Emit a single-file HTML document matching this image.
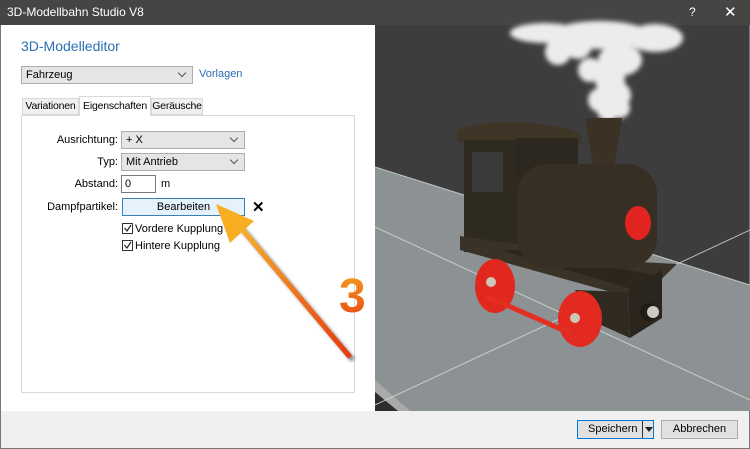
<!DOCTYPE html>
<html><head><meta charset="utf-8"><style>
*{margin:0;padding:0;box-sizing:border-box}
body{width:750px;height:449px;overflow:hidden;font-family:"Liberation Sans",sans-serif;font-size:11px;color:#000;background:#fff;position:relative}
.a{position:absolute}
.sel{position:absolute;background:#e5e5e5;border:1px solid #adadad;padding:2px 4px;font-size:11px;line-height:12px}
.sel:after{content:"";position:absolute;right:7px;top:3px;width:5px;height:5px;border-right:1px solid #555;border-bottom:1px solid #555;transform:rotate(45deg)}
.lbl{position:absolute;right:632px;font-size:11px;text-align:right}
.tab{position:absolute;top:98px;height:17px;border:1px solid #d9d9d9;background:#f0f0f0;font-size:10.5px;text-align:center;line-height:15px;letter-spacing:-0.2px}
</style></head><body>
<div class="a" style="left:0;top:0;width:750px;height:25px;background:#474543;color:#fff;font-size:12px;line-height:25px;padding-left:7px">3D-Modellbahn Studio V8</div>
<div class="a" style="left:689px;top:5px;color:#fff;font-size:12px">?</div>
<div class="a" style="left:724px;top:3px;color:#fff;font-size:15px">✕</div>
<div class="a" style="left:0;top:25px;width:1px;height:424px;background:#777"></div>
<div class="a" style="left:749px;top:25px;width:1px;height:424px;background:#777"></div>

<div class="a" style="left:21px;top:38px;color:#2d6fb6;font-size:14px">3D-Modelleditor</div>
<div class="sel" style="left:21px;top:66px;width:172px;height:18px">Fahrzeug</div>
<div class="a" style="left:199px;top:68px;color:#2d6fb6">Vorlagen</div>

<div class="a" style="left:21px;top:115px;width:334px;height:278px;border:1px solid #d9d9d9"></div>
<div class="tab" style="left:22px;width:57px">Variationen</div>
<div class="tab" style="left:151px;width:52px">Geräusche</div>
<div class="tab" style="left:79px;top:96px;height:20px;width:72px;background:#fff;border-bottom:none;line-height:18px">Eigenschaften</div>

<div class="lbl" style="top:134px">Ausrichtung:</div>
<div class="sel" style="left:121px;top:131px;width:124px;height:18px">+ X</div>
<div class="lbl" style="top:156px">Typ:</div>
<div class="sel" style="left:121px;top:153px;width:124px;height:18px">Mit Antrieb</div>
<div class="lbl" style="top:178px">Abstand:</div>
<div class="a" style="left:121px;top:175px;width:35px;height:18px;border:1px solid #7a7a7a;padding:2px 3px">0</div>
<div class="a" style="left:161px;top:178px">m</div>
<div class="lbl" style="top:201px">Dampfpartikel:</div>
<div class="a" style="left:122px;top:198px;width:123px;height:18px;background:#e5f1fb;border:1px solid #3c7fb1;text-align:center;line-height:16px">Bearbeiten</div>
<div class="a" style="left:252px;top:198px;font-size:15px;font-weight:bold">✕</div>
<div class="a" style="left:135px;top:223px">Vordere Kupplung</div>
<div class="a" style="left:135px;top:240px">Hintere Kupplung</div>

<svg class="a" style="left:0;top:0" width="750" height="449">
<defs>
<linearGradient id="ar" x1="0" y1="0" x2="1" y2="1"><stop offset="0" stop-color="#f8b52a"/><stop offset="1" stop-color="#e8380e"/></linearGradient>
<linearGradient id="t3" x1="0" y1="0" x2="0" y2="1"><stop offset="0" stop-color="#f5a024"/><stop offset="1" stop-color="#e8440f"/></linearGradient>
<filter id="bl"><feGaussianBlur stdDeviation="2.5"/></filter>
<filter id="sh"><feGaussianBlur stdDeviation="1.5"/></filter>
</defs>
<rect x="122.5" y="223.5" width="10" height="10" fill="#fff" stroke="#333"/>
<path d="M124.5,228 L127,231 L131,225" fill="none" stroke="#222" stroke-width="1.2"/>
<rect x="122.5" y="240.5" width="10" height="10" fill="#fff" stroke="#333"/>
<path d="M124.5,245 L127,248 L131,242" fill="none" stroke="#222" stroke-width="1.2"/>
<g filter="url(#sh)" opacity=".5" transform="translate(2,2)">
<line x1="238" y1="224" x2="351" y2="358" stroke="#000" stroke-width="5"/>
</g>
<line x1="236" y1="222" x2="350" y2="357" stroke="url(#ar)" stroke-width="5"/>
<polygon points="216,204 254,221 230,243" fill="#f7ae22"/>
<text x="339" y="312" font-family="Liberation Sans" font-weight="bold" font-size="48" fill="url(#t3)">3</text>

<!-- viewport -->
<rect x="375" y="25" width="374" height="386" fill="#3d3d3d"/>
<polygon points="375,167 750,285 750,411 375,411" fill="#8c9193"/>
<polygon points="375,380 410,411 375,411" fill="#a9abab"/>
<polygon points="375,392 398,411 375,411" fill="#2d2d2d"/>
<g stroke="#d8dcdc" stroke-width="1" opacity=".8">
<line x1="375" y1="227" x2="750" y2="400"/>
<line x1="375" y1="405" x2="750" y2="230"/>
<line x1="375" y1="167" x2="750" y2="285"/>
</g>
<!-- smoke -->
<g fill="#ececec" filter="url(#bl)">
<ellipse cx="545" cy="33" rx="35" ry="10"/>
<ellipse cx="600" cy="35" rx="50" ry="14"/>
<ellipse cx="655" cy="38" rx="28" ry="14"/>
<circle cx="558" cy="52" r="13"/>
<circle cx="578" cy="45" r="14"/>
<ellipse cx="620" cy="60" rx="22" ry="16"/>
<circle cx="590" cy="70" r="12"/>
<circle cx="610" cy="80" r="15"/>
<circle cx="618" cy="95" r="13"/>
<circle cx="600" cy="100" r="12"/>
<circle cx="608" cy="110" r="11"/>
<circle cx="620" cy="108" r="10"/>
</g>
<!-- train -->
<polygon points="585,118 622,118 612,182 596,182" fill="#3b3225"/>
<path d="M457,132 Q465,122 520,122 Q575,126 582,136 L582,145 L457,142 Z" fill="#3e3526"/>
<rect x="464" y="140" width="52" height="112" fill="#2f2a20"/>
<rect x="472" y="152" width="31" height="40" fill="#3a3a3a"/>
<rect x="516" y="138" width="62" height="114" fill="#2d281f"/>
<polygon points="460,236 640,262 677,264 640,300 460,250" fill="#3a3226"/>
<polygon points="500,250 635,290 655,275 520,250" fill="#2c261d"/>
<rect x="517" y="164" width="140" height="104" rx="30" fill="#372f24"/>
<ellipse cx="638" cy="223" rx="13" ry="17" fill="#e22420"/>
<polygon points="628,290 662,270 662,318 630,338" fill="#2b261d"/>
<polygon points="575,290 628,292 630,338 590,320" fill="#302a20"/>
<ellipse cx="495" cy="286" rx="20" ry="27" fill="#e0281f"/>
<ellipse cx="580" cy="319" rx="22" ry="28" fill="#e22a20"/>
<line x1="486" y1="296" x2="572" y2="334" stroke="#e52e22" stroke-width="5"/>
<circle cx="491" cy="282" r="5" fill="#cfc6b5"/>
<circle cx="575" cy="318" r="5" fill="#cfc6b5"/>
<circle cx="649" cy="312" r="9" fill="#1f1b15"/>
<circle cx="653" cy="312" r="6" fill="#cfcac0"/>
</svg>

<div class="a" style="left:1px;top:411px;width:748px;height:38px;background:#f0f0f0;border-bottom:1px solid #777"></div>
<div class="a" style="left:577px;top:420px;width:77px;height:19px;background:#e1e1e1;border:1px solid #0078d7;line-height:17px;padding-left:10px">Speichern</div>
<div class="a" style="left:642px;top:421px;width:1px;height:17px;background:#333"></div>
<div class="a" style="left:645px;top:427px;width:0;height:0;border-left:4px solid transparent;border-right:4px solid transparent;border-top:5px solid #222"></div>
<div class="a" style="left:661px;top:420px;width:77px;height:19px;background:#e1e1e1;border:1px solid #adadad;line-height:17px;text-align:center">Abbrechen</div>
</body></html>
